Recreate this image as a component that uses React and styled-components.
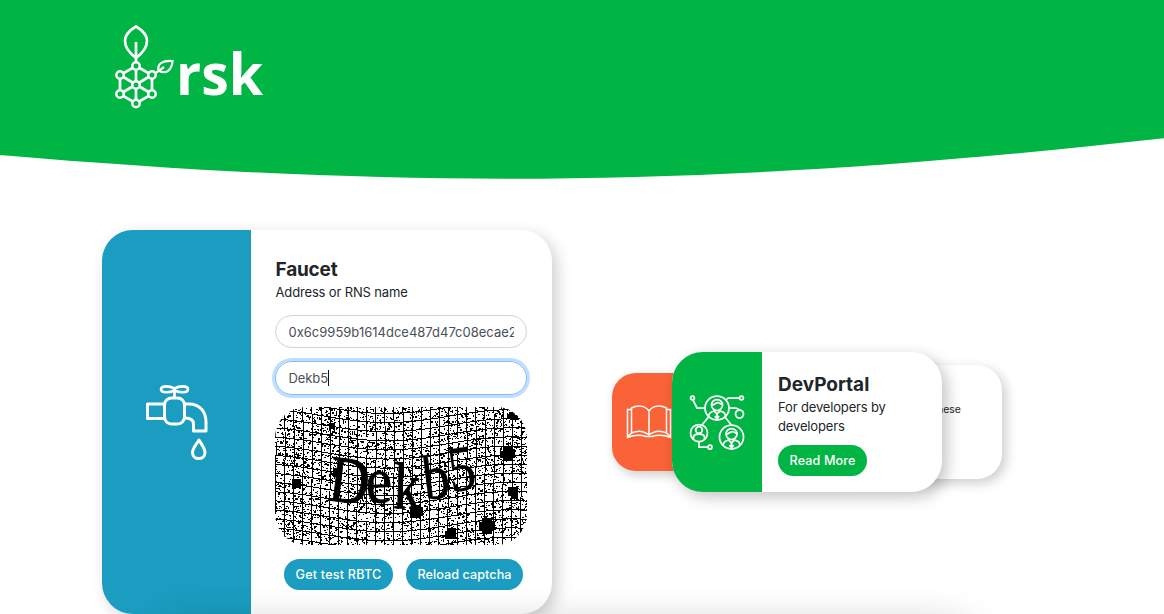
import React from "react";
import styled, { createGlobalStyle } from "styled-components";

const GlobalStyle = createGlobalStyle`
  * { box-sizing: border-box; }
  body { margin: 0; background: #fff; color: #212529; overflow: hidden;
    font-family: Inter, "Liberation Sans", sans-serif; }
  h2, p { margin: 0; }
`;

const Page = styled.div`
  height: 614px;
  overflow: hidden;
`;

const Header = styled.header`
  position: relative;
  height: 180px;
  padding: 20px 0 0 108px;
`;

const Wave = styled.svg`
  position: absolute;
  inset: 0;
  width: 100%;
  height: 180px;
`;

const Logo = styled.svg`
  position: relative;
  display: block;
  overflow: visible;
`;

const Main = styled.main`
  display: flex;
  align-items: center;
  padding: 50px 0 0 102px;
`;

const FaucetCard = styled.section`
  display: flex;
  width: 450px;
  height: 384px;
  border-radius: 31px;
  background: #fff;
  box-shadow: 5px 5px 15px rgba(0, 0, 0, 0.19);
  overflow: hidden;
`;

const FaucetSide = styled.div`
  width: 149px;
  padding: 150px 0 0 40px;
  background: #1a9dc0;
`;

const FaucetBody = styled.div`
  width: 301px;
  padding: 28px 25px 0 24px;
`;

const Title = styled.h2`
  padding-left: ${(p) => p.$indent ?? 0.5}px;
  font-size: 19px;
  line-height: 24px;
  font-weight: 700;
  letter-spacing: ${(p) => p.$spacing || "-0.2px"};
`;

const Text = styled.p`
  padding-left: ${(p) => p.$indent ?? 0.5}px;
  font-size: 13px;
  line-height: 19px;
  letter-spacing: -0.15px;
  margin-top: ${(p) => p.$top || 0}px;
`;

const Field = styled.div`
  display: flex;
  align-items: center;
  height: ${(p) => (p.$focused ? 34 : 33)}px;
  margin-top: 13px;
  padding: 0 12px 0 12.5px;
  border: 1px solid ${(p) => (p.$focused ? "#80bdff" : "#ced4da")};
  border-radius: 17px;
  box-shadow: ${(p) => (p.$focused ? "0 0 0 3px rgba(0, 123, 255, 0.25)" : "none")};
  color: #495057;
  font-size: 13px;
`;

const FieldValue = styled.span`
  overflow: hidden;
  white-space: nowrap;
  line-height: 20px;
  letter-spacing: ${(p) => p.$spacing || "0"};
`;

const Caret = styled.span`
  width: 1px;
  height: 16px;
  background: #111;
`;

const CaptchaImage = styled.svg`
  display: block;
  width: 252px;
  height: 138px;
  margin-top: 12px;
  border-radius: 31px;
`;

const Actions = styled.div`
  display: flex;
  gap: 13px;
  padding: 14px 0 0 9px;
`;

const Button = styled.button`
  width: ${(p) => p.$width}px;
  height: 31px;
  padding: 0;
  border: 0;
  border-radius: 16px;
  background: ${(p) => p.$color};
  color: #fff;
  font: 500 12.6px/31px Inter, "Liberation Sans", sans-serif;
  letter-spacing: ${(p) => p.$spacing || "0"};
  white-space: nowrap;
`;

const Carousel = styled.section`
  display: flex;
  align-items: center;
  margin-left: 60px;
`;

const BookCard = styled.div`
  display: flex;
  align-items: center;
  width: 120px;
  height: 98px;
  margin-right: -60px;
  padding-left: 14px;
  border-radius: 24px;
  background: #f96337;
  box-shadow: 3px 4px 11px rgba(0, 0, 0, 0.2);
`;

const PortalCard = styled.div`
  position: relative;
  z-index: 1;
  display: flex;
  width: 270px;
  height: 139.5px;
  margin-bottom: 0.5px;
  border-radius: 31px;
  background: #fff;
  box-shadow: 5px 5px 15px rgba(0, 0, 0, 0.23);
  overflow: hidden;
`;

const PortalSide = styled.div`
  width: 90px;
  padding: 40px 0 0 16px;
  background: #00b543;
`;

const PortalBody = styled.div`
  width: 180px;
  padding: 21px 20px 0 15px;
`;

const PortalAction = styled.div`
  padding: 8.500px 0 0 1px;
`;

const NextCard = styled.div`
  width: 180px;
  height: 114px;
  margin-left: -120px;
  padding: 37px 41px 0 0;
  border-radius: 25px;
  background: #fff;
  box-shadow: 4px 4px 12px rgba(0, 0, 0, 0.2);
  font-size: 10.5px;
  line-height: 16px;
  text-align: right;
`;

const NextSection = styled.section`
  position: relative;
  width: 816px;
  height: 100px;
  margin: 9px 0 0 158px;
  border-radius: 30px;
  background: #fff;
  box-shadow: 0 0 38px rgba(0, 0, 0, 0.2);
`;

function RskLogo() {
  const nodes = [[28, 46], [12, 55], [44, 55], [28, 65], [12, 74], [44, 74], [28, 83.5]];
  return (
    <Logo width="160" height="94" viewBox="0 0 160 94" fill="none" stroke="#fff" strokeWidth="2.7">
      <path d="M28 38C20 32 17 27 17 21C17 15 22 10 28 6.500C34 10 39 15 39 21C39 27 36 32 28 38ZM28 22V83.500M28 46L44 55V74L28 83.500L12 74V55Z" />
      <path d="M12 55L44 74M44 55L12 74" />
      <path d="M45 54C50 52 52 50 56 47M50.500 50.500C49 44 55 40 64.500 41C64 50 58 55 50.500 50.500Z" strokeWidth="2.200" />
      {nodes.map(([x, y]) => (
        <circle key={`${x}-${y}`} cx={x} cy={y} r="3.7" fill="#00b543" strokeWidth="2.4" />
      ))}
      <text x="68" y="74.500" textLength="87" lengthAdjust="spacingAndGlyphs" fill="#fff" stroke="none"
        fontFamily="Open Sans, Noto Sans, sans-serif" fontWeight="700" fontSize="57.5">rsk</text>
    </Logo>
  );
}

function TapIcon() {
  return (
    <svg width="70" height="84" viewBox="0 0 70 84" fill="none" stroke="#fff" strokeWidth="3" strokeLinejoin="round">
      <path d="M23 24H5.500V38.500H23M43 24H47C58 24 64 32 64 42V51H51.500V44C51.500 40 48 38 43 38" />
      <rect x="22.500" y="18" width="20" height="26" rx="7" />
      <path d="M32.500 18V9.500M32.500 8.500C28 6 19 5 19 9.300C19 13.500 28 12.500 32.500 10.500C37 12.500 46 13.500 46 9.300C46 5 37 6 32.500 8.500Z" strokeWidth="2.700" />
      <path d="M57 60C54 65 50.500 68.500 50.500 72.500C50.500 80.500 63 80.500 63 72.500C63 68.500 60 65 57 60Z" />
    </svg>
  );
}

function BookIcon() {
  return (
    <svg width="46" height="36" viewBox="0 0 46 36" fill="none" stroke="#fff" strokeWidth="1.5">
      <path d="M23 7C19 1 11 1 5.500 4V29C12 26 18 27 23 31C28 27 34 26 40.500 29V4C35 1 27 1 23 7V31" />
      <path d="M5.500 5.500H1.500V33.500C8 31 15 31 20 32.500H26C31 31 38 31 44.500 33.500V5.500H40.500M2 32.500L5.500 29M44 32.500L40.500 29" />
    </svg>
  );
}

function Person({ x, y }) {
  return (
    <g transform={`translate(${x} ${y})`}>
      <circle r="12" />
      <circle cy="-3" r="5.5" />
      <path d="M-5 -3C-2 -3 0 -7 2 -5C3 -4 4 -4 5.500 -4M-8.500 9C-8.500 4 -5 4 -3 3L0 6L3 3C6 4 8.500 4 8.500 9M0 5V11M-2 8L0 11L2 8" />
    </g>
  );
}

function NetworkIcon() {
  return (
    <svg width="58" height="60" viewBox="0 0 58 60" fill="none" stroke="#fff" strokeWidth="1.75">
      <Person x={29} y={16} />
      <Person x={43.5} y={45} />
      <circle cx="11" cy="41" r="8.500" />
      <circle cx="11" cy="38" r="3.300" />
      <path d="M5.500 47V45C5.500 41 16.500 41 16.500 45V47M20.500 25L14 33M37 25L43 32.500M17 16H9L5 8M38 8L40 6H51M41 16H48L52 18M11 50V55H20" />
      <circle cx="4.500" cy="6" r="1.900" />
      <circle cx="53.500" cy="6" r="1.900" />
      <circle cx="51.500" cy="22" r="4" />
      <circle cx="22" cy="55" r="2" />
    </svg>
  );
}

const shift = (x) => 6.5 * Math.cos(((x - 112) * Math.PI) / 125);

function noisePath() {
  let seed = 7919;
  const next = () => {
    seed = (seed * 1664525 + 1013904223) % 4294967296;
    return seed / 4294967296;
  };
  let d = "";
  for (let i = 0; i < 4700; i++) {
    const x = Math.floor(next() * 252);
    const y = Math.floor(next() * 138);
    const w = next() > 0.7 ? 2 : 1;
    const h = next() > 0.8 ? 2 : 1;
    d += `M${x} ${y}h${w}v${h}h-${w}z`;
  }
  return d;
}

function gridPath() {
  let d = "";
  for (let i = -2; i < 17; i++) {
    for (let x = 0; x <= 252; x += 6) {
      d += `${x ? "L" : "M"}${x} ${(i * 9.1 + shift(x)).toFixed(1)}`;
    }
  }
  for (let i = 0; i < 28; i++) {
    for (let y = 0; y <= 138; y += 6) {
      d += `${y ? "L" : "M"}${(i * 9.1 + 0.5 + 0.5 * Math.sin(y / 25)).toFixed(1)} ${y}`;
    }
  }
  return d;
}

const NOISE = noisePath();
const GRID = gridPath();
const GLYPHS = [
  { char: "D", x: 52, y: 93, angle: 7, size: 66, stretch: 0.84, weight: 1 },
  { char: "e", x: 91, y: 96, angle: -2, size: 66, stretch: 0.92, weight: 0.4 },
  { char: "k", x: 118, y: 101, angle: 2, size: 66, stretch: 0.8, weight: 0.9 },
  { char: "b", x: 150, y: 93, angle: -7, size: 64, stretch: 0.84, weight: 0.4 },
  { char: "5", x: 176, y: 85, angle: -8, size: 65, stretch: 0.84, weight: 0.2 },
];

function Captcha() {
  return (
    <CaptchaImage viewBox="0 0 252 138" role="img" aria-label="captcha">
      <rect width="252" height="138" fill="#fff" />
      <path d={NOISE} shapeRendering="crispEdges" />
      <path d={GRID} fill="none" stroke="#000" strokeWidth="1" shapeRendering="crispEdges" />
      {GLYPHS.map((g) => (
        <text key={g.char} fontFamily="Liberation Serif, serif" fontSize={g.size} stroke="#000" strokeWidth={g.weight}
          transform={`translate(${g.x} ${g.y}) rotate(${g.angle}) scale(${g.stretch} 1)`}>{g.char}</text>
      ))}
      <rect x="54" y="16" width="6" height="6" />
      <rect x="58" y="61" width="9" height="9" />
      <rect x="17" y="72" width="9" height="9" />
      <path d="M234 5h6v3h3v5h-8v-2h-3v-4h2zM228 40h9v2h3v9h-2v3h-9v-3h-4v-7h3zM136 98h10v3h2v8h-3v2h-8v-2h-2v-8h1zM233 80h10v12h-7v-3h-3zM172 121h9v11h-11v-8h2zM207 111h10v3h3v9h-3v4h-10v-3h-3v-9h3z" />
    </CaptchaImage>
  );
}

export default function App() {
  return (
    <Page>
      <GlobalStyle />
      <Header>
        <Wave viewBox="0 0 1164 180" preserveAspectRatio="none">
          <path d="M0 0H1164V138.300C730 186.300 420 191 0 155Z" fill="#00b543" />
        </Wave>
        <RskLogo />
      </Header>
      <Main>
        <FaucetCard>
          <FaucetSide><TapIcon /></FaucetSide>
          <FaucetBody>
            <Title>Faucet</Title>
            <Text $top={1}>Address or RNS name</Text>
            <Field><FieldValue>0x6c9959b1614dce487d47c08ecae2</FieldValue></Field>
            <Field $focused><FieldValue $spacing="-0.1px">Dekb5</FieldValue><Caret /></Field>
            <Captcha />
            <Actions>
              <Button $width={109} $color="#1a9dc0" $spacing="0.2px">Get test RBTC</Button>
              <Button $width={117} $color="#1a9dc0" $spacing="0.08px">Reload captcha</Button>
            </Actions>
          </FaucetBody>
        </FaucetCard>
        <Carousel>
          <BookCard><BookIcon /></BookCard>
          <PortalCard>
            <PortalSide><NetworkIcon /></PortalSide>
            <PortalBody>
              <Title $spacing="0px" $indent={1}>DevPortal</Title>
              <Text $top={1} $indent={1}>For developers by developers</Text>
              <PortalAction><Button $width={89} $color="#00b543" $spacing="0.1px">Read More</Button></PortalAction>
            </PortalBody>
          </PortalCard>
          <NextCard>these</NextCard>
        </Carousel>
      </Main>
      <NextSection />
    </Page>
  );
}
